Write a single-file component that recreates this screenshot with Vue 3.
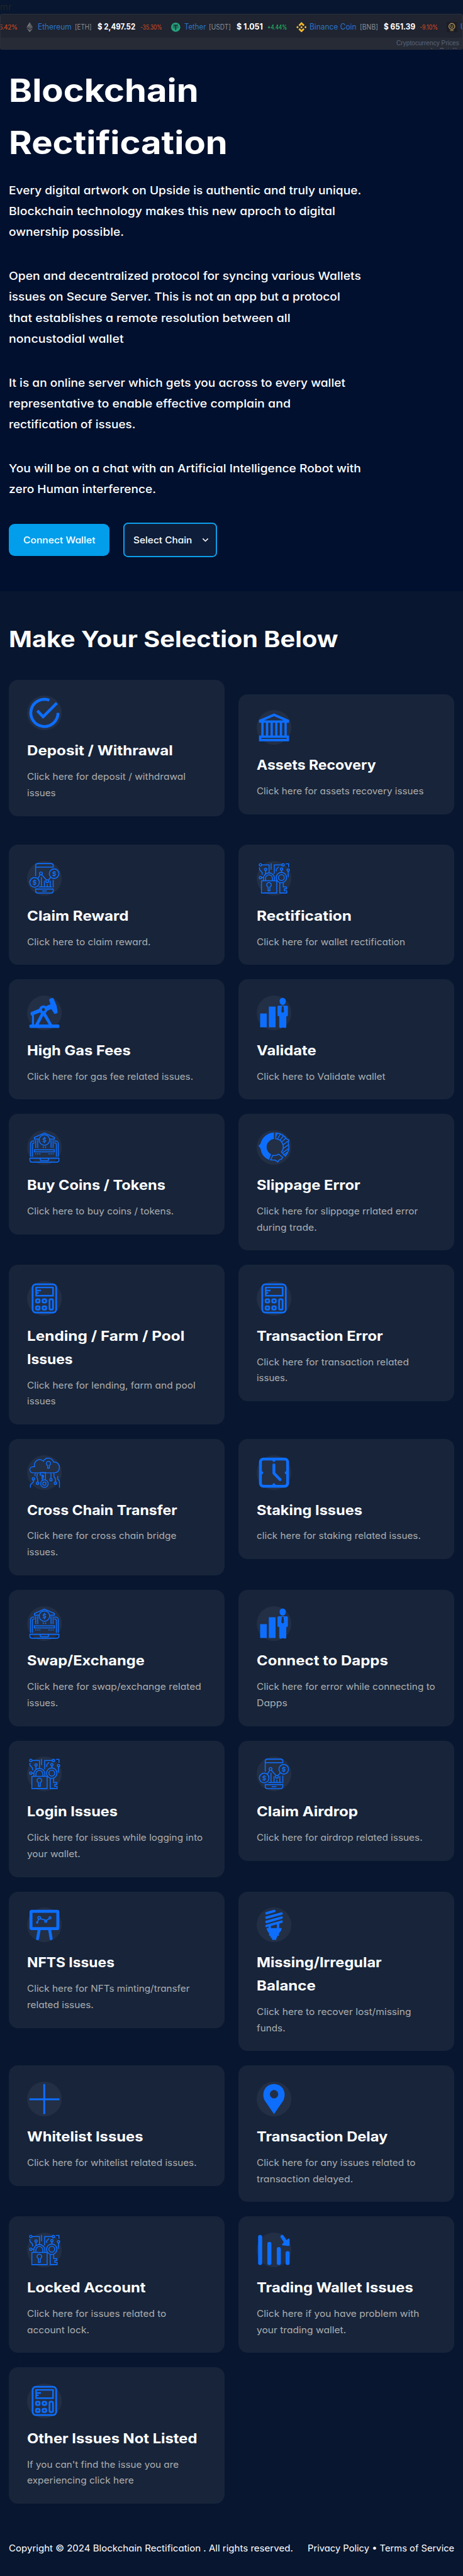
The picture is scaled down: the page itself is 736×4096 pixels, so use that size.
<script setup>
// Fits a single line of text to a fixed measure by widening or narrowing its glyphs.
const vFit = {
  mounted(el, { value }) {
    const root = el.closest('.page')
    const scale = root.getBoundingClientRect().width / 800
    const natural = el.getBoundingClientRect().width / scale
    el.style.width = `${value}px`
    el.style.transformOrigin = '0 50%'
    el.style.transform = `scaleX(${value / natural})`
  },
}

const coins = [
  { icon: 'eth', name: ['Ethereum', 58.5], sym: ['[ETH]', 29], price: ['$ 2,497.52', 65.5], change: ['-35.30%', 37.5], up: false },
  { icon: 'usdt', name: ['Tether', 37.5], sym: ['[USDT]', 38], price: ['$ 1.051', 45.5], change: ['+4.44%', 34], up: true },
  { icon: 'bnb', name: ['Binance Coin', 81], sym: ['[BNB]', 31.5], price: ['$ 651.39', 54.5], change: ['-9.10%', 31.5], up: false },
]

const paragraphs = [
  [['Every digital artwork on Upside is authentic and truly unique.', 609], ['Blockchain technology makes this new aproch to digital', 564], ['ownership possible.', 199]],
  [['Open and decentralized protocol for syncing various Wallets', 608.5], ['issues on Secure Server. This is not an app but a protocol', 572.5], ['that establishes a remote resolution between all', 486.5], ['noncustodial wallet', 198.5]],
  [['It is an online server which gets you across to every wallet', 581.5], ['representative to enable effective complain and', 487], ['rectification of issues.', 219]],
  [['You will be on a chat with an Artificial Intelligence Robot with', 608.5], ['zero Human interference.', 254.5]],
]

const cards = [
  { icon: 'check', title: [['Deposit / Withrawal', 252]], text: [['Click here for deposit / withdrawal', 274], ['issues', 49.5]], mod: 'tall' },
  { icon: 'bank', title: [['Assets Recovery', 206]], text: [['Click here for assets recovery issues', 288.5]], mod: 'low' },
  { icon: 'phone', title: [['Claim Reward', 175.5]], text: [['Click here to claim reward.', 213.5]] },
  { icon: 'lock', title: [['Rectification', 164]], text: [['Click here for wallet rectification', 256.5]] },
  { icon: 'pump', title: [['High Gas Fees', 179]], text: [['Click here for gas fee related issues.', 287]] },
  { icon: 'man', title: [['Validate', 103]], text: [['Click here to Validate wallet', 222.5]] },
  { icon: 'laptop', title: [['Buy Coins / Tokens', 239]], text: [['Click here to buy coins / tokens.', 253.5]] },
  { icon: 'donut', title: [['Slippage Error', 179]], text: [['Click here for slippage rrlated error', 278.5], ['during trade.', 104]] },
  { icon: 'calc', title: [['Lending / Farm / Pool', 272], ['Issues', 79]], text: [['Click here for lending, farm and pool', 291], ['issues', 49.5]] },
  { icon: 'calc', title: [['Transaction Error', 218]], text: [['Click here for transaction related', 263], ['issues.', 53.5]] },
  { icon: 'cloud', title: [['Cross Chain Transfer', 259.5]], text: [['Click here for cross chain bridge', 258], ['issues.', 53.5]] },
  { icon: 'clock', title: [['Staking Issues', 182.5]], text: [['click here for staking related issues.', 283.5]] },
  { icon: 'laptop', title: [['Swap/Exchange', 203]], text: [['Click here for swap/exchange related', 301], ['issues.', 53.5]] },
  { icon: 'man', title: [['Connect to Dapps', 227]], text: [['Click here for error while connecting to', 308.5], ['Dapps', 53]] },
  { icon: 'lock', title: [['Login Issues', 156.5]], text: [['Click here for issues while logging into', 303.5], ['your wallet.', 92]] },
  { icon: 'phone', title: [['Claim Airdrop', 175]], text: [['Click here for airdrop related issues.', 286.5]] },
  { icon: 'board', title: [['NFTS Issues', 151]], text: [['Click here for NFTs minting/transfer', 281], ['related issues.', 115]] },
  { icon: 'bulb', title: [['Missing/Irregular', 216], ['Balance', 102]], text: [['Click here to recover lost/missing', 267], ['funds.', 49.5]] },
  { icon: 'plus', title: [['Whitelist Issues', 200.5]], text: [['Click here for whitelist related issues.', 293]] },
  { icon: 'pin', title: [['Transaction Delay', 226.5]], text: [['Click here for any issues related to', 274.5], ['transaction delayed.', 166.5]] },
  { icon: 'lock', title: [['Locked Account', 205]], text: [['Click here for issues related to', 240.5], ['account lock.', 107.5]] },
  { icon: 'bars', title: [['Trading Wallet Issues', 270.5]], text: [['Click here if you have problem with', 281], ['your trading wallet.', 154.5]] },
  { icon: 'calc', title: [['Other Issues Not Listed', 294]], text: [["If you can't find the issue you are", 262], ['experiencing click here', 184.5]] },
]
</script>

<template>
  <div class="page">
    <div class="mr">mr</div>
    <div class="ticker">
      <div class="track">
        <span class="change first">5.42%</span>
        <div v-for="c in coins" :key="c.icon" class="coin">
          <svg class="coin-icon" viewBox="0 0 18 18">
            <g v-if="c.icon === 'eth'">
              <path d="M9 .2L3.6 9.2 9 12.2l5.400-3z" fill="#5a5c61" />
              <path d="M9 .2L3.600 9.200 9 6.800z" fill="#777a7d" />
              <path d="M9 6.800L3.600 9.200 9 12.200z" fill="#4a4c50" />
              <path d="M3.600 10.500L9 13.600l5.400-3.100L9 18z" fill="#696b6f" />
            </g>
            <g v-else-if="c.icon === 'usdt'">
              <circle cx="9" cy="9" r="8" fill="#26a17b" />
              <path d="M5 5.600h8M9 5.600v8.200" stroke="#1a3936" stroke-width="2" fill="none" />
              <ellipse cx="9" cy="8.900" rx="5" ry="1.300" stroke="#1a3936" stroke-width=".8" fill="none" />
            </g>
            <g v-else fill="#f3ba2f">
              <path d="M9 6.900L11.100 9 9 11.100 6.900 9zM2.100 6.900L4.200 9 2.100 11.100 0 9zM15.900 6.900L18 9l-2.100 2.100L13.800 9z" />
              <path d="M9 0l5.200 5.200-2.100 2.100L9 4.200 5.900 7.300 3.800 5.200zM9 18l5.200-5.200-2.100-2.100L9 13.800l-3.100-3.100-2.100 2.100z" />
            </g>
          </svg>
          <span v-fit="c.name[1]" class="name">{{ c.name[0] }}</span>
          <span v-fit="c.sym[1]" class="sym">{{ c.sym[0] }}</span>
          <span v-fit="c.price[1]" class="price">{{ c.price[0] }}</span>
          <span v-fit="c.change[1]" class="change" :class="{ up: c.up }">{{ c.change[0] }}</span>
        </div>
        <div class="coin">
          <svg class="coin-icon" viewBox="0 0 18 18">
            <rect width="18" height="18" fill="#1c1c23" />
            <circle cx="9" cy="7.500" r="5" fill="none" stroke="#b39a62" stroke-width="1.500" />
            <path d="M7.200 5v3a1.800 1.800 0 0 0 3.600 0V5M6 14.800h6" fill="none" stroke="#94804f" stroke-width="1.300" />
          </svg>
          <span class="name">U</span>
        </div>
      </div>
      <div class="credit">
        <span v-fit="108.5">Cryptocurrency Prices</span>
        <span>by Coinlib</span>
      </div>
    </div>

    <header class="hero">
      <h1>
        <span v-fit="328">Blockchain</span>
        <span v-fit="378">Rectification</span>
      </h1>
      <p v-for="(p, i) in paragraphs" :key="i">
        <span v-for="l in p" :key="l[0]" v-fit="l[1]">{{ l[0] }}</span>
      </p>
      <div class="actions">
        <button class="connect"><span v-fit="124.500">Connect Wallet</span></button>
        <button class="select">
          <span v-fit="101.500">Select Chain</span>
          <svg viewBox="0 0 12 8"><path d="M1.500 1.500L6 6l4.500-4.500" fill="none" stroke="#fff" stroke-width="1.600" /></svg>
        </button>
      </div>
    </header>

    <main>
      <h2><span v-fit="569">Make Your Selection Below</span></h2>
      <div class="grid">
        <article v-for="(c, i) in cards" :key="i" class="card" :class="c.mod">
          <svg class="icon" viewBox="0 0 60 60">
            <circle class="disc" cx="30" cy="30" r="30" />
            <g v-if="c.icon === 'check'" class="line" stroke-width="5">
              <path d="M53.500 30A23.500 23.500 0 1 1 38.500 8.100M17.800 26.200l10 10.500L51.500 13" />
            </g>
            <path v-else-if="c.icon === 'bank'" class="solid" fill-rule="evenodd" d="M30 6L56 17v5h-4v22h4v10H4V44h4V22H4v-5zM30 10.500L13 18h34zM12 22v22h4V22zm8 0v22h4V22zm8 0v22h4V22zm8 0v22h4V22zm8 0v22h4V22zM8 48v2h44v-2z" />
            <g v-else-if="c.icon === 'phone'" class="line" stroke-width="1.700">
              <path d="M14.800 26V8a3.500 3.500 0 0 1 3.500-3.500h23.400A3.500 3.500 0 0 1 45.200 8v2.500H14.800M14.800 48.500h30.400V52a3.500 3.500 0 0 1-3.500 3.500H18.300a3.500 3.500 0 0 1-3.500-3.500zM26 52h8M45.200 33v13M20 44.800h23M24.800 28v16.500M30 34v10.500M35 40v4.500M40 34v10.500M18.500 30.500l4-6.500M25.500 24l8 9M37 33l4-5" />
              <circle cx="13" cy="37" r="8.300" /><circle cx="46.800" cy="22" r="8.300" />
              <circle cx="24" cy="21.500" r="2.400" /><circle cx="35" cy="35" r="2.400" />
              <path d="M16 34.300h-4.200a1.500 1.500 0 0 0 0 2.800h2.400a1.500 1.500 0 0 1 0 2.800H10M13 32.300v2M13 40v2M49.800 19.300h-4.200a1.500 1.500 0 0 0 0 2.800H48a1.500 1.500 0 0 1 0 2.800h-4.200M46.800 17.300v2M46.800 25v2" />
            </g>
            <g v-else-if="c.icon === 'lock'" class="line" stroke-width="1.700">
              <path d="M8.300 34.300h26.400v21H8.300zM11.800 34v-4a9.500 9.500 0 0 1 19 0v4M15.300 34v-4a6 6 0 0 1 12 0v4M19.800 45a4 4 0 1 1 3 0v6.500h-3zM40 37.200v18.100h12v-3.600h-4v-3.500h3.500v-3.400h-5.500v-7.600" />
              <circle cx="42.700" cy="28.700" r="9" /><circle cx="42.700" cy="28.700" r="5" />
              <circle cx="6.500" cy="6.700" r="2" /><circle cx="45.700" cy="6.700" r="2" /><circle cx="15.500" cy="14.500" r="2" /><circle cx="43" cy="14" r="2" /><circle cx="54.500" cy="15.500" r="2" /><circle cx="6.500" cy="28.700" r="2" />
              <path d="M8.500 6.700h13V20M25 4v11M30.500 22V6.700h13.200M50 4.900h5.200V11M15.500 16.500V23M43 16v4M54.500 17.500V28M4.900 11v4l4.600 5v4M8.500 28.700H12M34 18v-3.500l4-4.500" />
            </g>
            <g v-else-if="c.icon === 'pump'" class="solid">
              <rect x="4" y="50" width="52" height="6" rx="2" />
              <path fill-rule="evenodd" d="M44.500 4.200Q46 4.500 47 8l4 9 2 11.500q-.5 2.500-5.500 3.200L42 23.500l-7.200 2.800a7.500 7.500 0 0 1-12.500 3L8 34.800Q5 33 6.500 28.700l14.500-6a7.500 7.500 0 0 1 11.500-4.200l8-3.500L38 7q2-2.500 6.500-2.800zM28.300 21.600a2.700 2.700 0 1 0 .1 0z" />
              <path d="M8.500 33H12v18H8.500zM25 29h6.500L44 51h-6L28.300 34.500 19.500 51h-6z" />
            </g>
            <g v-else-if="c.icon === 'man'" class="solid">
              <path d="M6 31h11.500v24H6zM21 19h11.700v36H21z" />
              <path d="M45 4c3.500 0 5.400 2.500 5.400 5.500C50.400 13.500 48 16.300 45 16.300s-5.400-2.800-5.400-6.800C39.600 6.500 41.500 4 45 4z" />
              <path fill-rule="evenodd" d="M38 17.500h14q2 0 2 2V34q0 2-2.800 2v18q-.2 2-2.700 2l-3.500-.8-3.500.8q-2.500 0-2.500-2V36q-3 0-3-2V19.500q0-2 2-2zM43.500 18.500L42.700 28l2.300 2 2.300-2-.8-9.500z" />
            </g>
            <g v-else-if="c.icon === 'laptop'" class="line" stroke-width="1.700">
              <path d="M21.500 15.500h-8.700v-3L30 5l17.200 7.500v3h-8.700M13.300 18.800H10.500A4.500 4.500 0 0 0 6 23.300V46M13.300 22h-1.500Q9.300 22 9.300 25v21M46.700 18.800h2.800a4.500 4.500 0 0 1 4.500 4.500V46M46.700 22h1.500q2.500 0 2.500 3v21M15 17v14M18.500 17v14M41.500 17v14M45 17v14M12.800 34h34.400v3.500H12.800zM28 28v3M32 28v3M4.900 48.500h50.200v3.300a3.500 3.500 0 0 1-3.500 3.500H8.400a3.500 3.500 0 0 1-3.500-3.500zM22.800 48.500h14.400v2.200q0 2-2 2H24.800q-2 0-2-2z" />
              <path d="M14 41h9.500M37 41h9.500" stroke-dasharray="2 1.500" />
              <circle cx="30" cy="17" r="9" />
              <path d="M33 14.200h-4.200a1.500 1.500 0 0 0 0 2.800h2.400a1.500 1.500 0 0 1 0 2.800H27M30 11.500v2.700M30 20v2.500" />
            </g>
            <g v-else-if="c.icon === 'donut'">
              <path class="solid" d="M29.800 4v11.300A14 14 0 0 0 25 41.800L21.300 51.500A25 25 0 0 1 6.500 31.500L3 26.800 6.500 24A25 25 0 0 1 29.800 4z" />
              <g class="line" stroke-width="1.700">
                <path d="M33 5a24 24 0 0 1 19 10.500l4 1.500-1.500 5A24 24 0 0 1 49.500 45l-6.700-7.200A14 14 0 0 0 33 15z" />
                <path d="M36 5L33 11M41 7l-5 8M46 10l-6 8M50 14l-7 7M54 19l-9 7M55.500 25L45.500 32M55 32l-10 7M53.500 38L46 43" />
                <path d="M28 43.500q6 1 10-2l7 5.500-2 3-4 1.500-2.500 3.500-4-3-8.500-.5z" />
              </g>
            </g>
            <g v-else-if="c.icon === 'calc'" class="line" stroke-width="3">
              <rect x="9.600" y="5.600" width="40.800" height="48.800" rx="5.500" />
              <path d="M15.700 11h29.200v14.200H15.700zM15 16.300h9M15 20.500h5" stroke-width="2.700" />
              <rect x="15.500" y="31.400" width="6.200" height="5.600" rx="2" /><rect x="26.900" y="31.400" width="6.200" height="5.600" rx="2" />
              <rect x="15.500" y="43.600" width="6.200" height="5.600" rx="2" /><rect x="26.900" y="43.600" width="6.200" height="5.600" rx="2" />
              <rect x="38.800" y="31.400" width="6" height="17.800" rx="2" />
            </g>
            <g v-else-if="c.icon === 'cloud'" class="line" stroke-width="1.600">
              <path d="M10 30.300a5.200 5.200 0 0 1 0-10.400h3C11 10.500 20.500 3.500 28.300 10.300 32.500 2.500 43 3.500 46 11.800 52 11 56 16 56 21q-.5 9.300-9 9.300z" />
              <path d="M35.500 17.500a3.700 3.700 0 1 1 3 0v4.800h-3zM26.800 43.500V40.500h-1v-3.700h1v-2.500h-4v-4.500h9V43M28.300 34v6M18 31l-1 6.500 1.500 5v3.800M14 31v5M11 43v3l-5.200 5v5M41.300 31v9M46.500 31v6l2.800 4v5M53 36v5l3 4v11" />
              <circle cx="30" cy="49" r="6.500" /><circle cx="30" cy="49" r="2.800" />
              <circle cx="11" cy="40.700" r="2" /><circle cx="18.200" cy="48.300" r="2" /><circle cx="41.300" cy="42.300" r="2" /><circle cx="49" cy="48.300" r="2" />
            </g>
            <g v-else-if="c.icon === 'clock'" class="line" stroke-width="5">
              <rect x="6.500" y="6.500" width="47" height="47" rx="5" />
              <path d="M29.800 16.500V31L40.500 42" stroke-linecap="round" stroke-linejoin="round" />
              <path d="M29.800 7v2M29.800 51v2M7 30.200h2M51 30.200h2" stroke-linecap="round" />
            </g>
            <g v-else-if="c.icon === 'board'" class="line" stroke-width="5.200">
              <rect x="6.800" y="6.600" width="46.400" height="30" rx="1" />
              <path d="M21 38l-2.800 16M39 38l2.600 16" stroke-linecap="round" />
              <g stroke-width="1.900"><circle cx="21" cy="18" r="2.300" /><circle cx="32.300" cy="24" r="1.800" /><circle cx="39.700" cy="18" r="1.700" /><circle cx="17.500" cy="26" r="1" /><path d="M18 25l2-5M23 19.500l7.800 2 2 1 5.500-3" /></g>
            </g>
            <g v-else-if="c.icon === 'bulb'">
              <path class="line" stroke-width="4.300" stroke-linecap="round" d="M17 10l13.500-3.800M17 17.500l26-7M17 25l26-7.500M17 32l26-7.500" />
              <path class="line" stroke-width="4" d="M22.500 30v7M37 27v10" />
              <path class="solid" d="M17 35.500h26.500l-1.500 5-3.500 4V49h-3v3.500H34V56h-7.500v-3.500H24V49h-2.500v-4.500l-3-4z" />
            </g>
            <path v-else-if="c.icon === 'plus'" class="line" stroke-width="3.200" d="M29.700 4v52M4 30.500h52" />
            <path v-else-if="c.icon === 'pin'" class="solid" fill-rule="evenodd" d="M30 56L14.500 33.500C7 20 14.500 4 30 4s23 16 15.500 29.500zM30 14.500a7.200 7.200 0 1 0 .1 0z" />
            <g v-else class="solid">
              <rect x="2.500" y="4" width="7" height="52" rx="3.300" /><rect x="18.500" y="16" width="7" height="40" rx="3.300" />
              <rect x="34.800" y="25" width="7" height="31" rx="3.300" /><rect x="50" y="32" width="7" height="24" rx="3.300" />
              <path d="M41.500 5.500q2.500-2.500 4.500-1l5.500 8.500 4-3q1.500 0 1.500 2v9q0 2-2 2l-10-1q-2-1-.5-2.500l2.500-3-5.500-8q-1-1.500 0-3z" />
            </g>
          </svg>
          <h3><span v-for="l in c.title" :key="l[0]" v-fit="l[1]">{{ l[0] }}</span></h3>
          <div class="text"><span v-for="l in c.text" :key="l[0]" v-fit="l[1]">{{ l[0] }}</span></div>
        </article>
      </div>
    </main>

    <footer>
      <span v-fit="491">Copyright © 2024 Blockchain Rectification . All rights reserved.</span>
      <span v-fit="253.500">Privacy Policy • Terms of Service</span>
    </footer>
  </div>
</template>

<style>
body { margin: 0; background: #08162f; }
</style>

<style scoped>
.page {
  zoom: 0.92;
  width: 800px;
  height: 4452px;
  overflow: hidden;
  background: #08162f;
  color: #fff;
  font-family: Inter, "Noto Sans", sans-serif;
  font-feature-settings: "cv11" 1;
  font-optical-sizing: none;
}
.page * { box-sizing: border-box; }
h1, h2, h3, p { margin: 0; }
h1, h2, h3 { font-feature-settings: normal; }
h1 span, p span, h2 span, h3 span, .text span { display: block; width: max-content; white-space: nowrap; }
.mr { height: 24px; font-size: 16px; line-height: 24px; color: #212529; }
.ticker {
  height: 62px;
  overflow: hidden;
  border: 1px solid #2a2f3a;
  border-radius: 3px;
  background: #262b36;
}
.track {
  display: flex;
  align-items: center;
  height: 40px;
  padding-top: 3px;
  background: #1f2430;
  overflow: hidden;
  white-space: nowrap;
  font-feature-settings: normal;
}
.coin { display: flex; align-items: baseline; flex: none; margin-left: 15px; }
.coin span { flex: none; }
.coin-icon { width: 18px; height: 18px; margin-right: 5.500px; align-self: center; }
.name { font-size: 13.500px; color: #2a74c9; }
.sym { margin-left: 5.500px; font-size: 12px; color: #8b8d91; }
.price { margin-left: 10px; font-size: 14px; font-weight: 700; }
.change { margin-left: 8px; font-size: 11px; color: #d94a1e; }
.change.up { color: #1fc163; }
.change.first { flex: none; width: 29px; margin: 1px 0 0 -3px; letter-spacing: -0.500px; }
.credit {
  display: flex;
  flex-direction: column;
  align-items: flex-end;
  padding: 3px 6px 0 0;
  font: 11px/13.500px "Liberation Sans", Arial, sans-serif;
  color: #5c6576;
}
.hero { height: 935.500px; padding: 26px 15px 0; background: #00102e; }
h1 { margin-bottom: 19.500px; font-size: 55px; font-weight: 700; line-height: 89.800px; }
h1 span { margin-left: 0; }
.hero p { margin-bottom: 40px; font-size: 19.500px; font-weight: 500; line-height: 36px; }
.actions { display: flex; align-items: center; gap: 24px; }
button { display: flex; align-items: center; color: #fff; font: inherit; font-size: 15.500px; font-weight: 500; white-space: nowrap; }
button span { flex: none; text-align: left; }
.connect { justify-content: center; width: 174px; height: 56px; border: 0; border-radius: 10px; background: #029deb; }
.select { justify-content: space-between; width: 162px; height: 60px; padding: 0 12px 0 15.500px; border: 2.200px solid #0d9fea; border-radius: 8px; background: #0e1d3a; }
.select svg { width: 12px; height: 8px; }
main { padding: 54px 15px 0; }
h2 { margin-bottom: 39px; font-size: 38.500px; font-weight: 700; line-height: 60px; }
.grid { display: grid; grid-template-columns: 373px 373px; column-gap: 24px; row-gap: 24.800px; align-items: start; }
.card { padding: 28px 0 25px 32px; border-radius: 16px; background: #17243a; }
.card.tall { margin-bottom: 24.500px; }
.card.low { margin-top: 25px; }
.icon { display: block; width: 60px; height: 60px; margin-bottom: 15px; }
.disc { fill: #232f45; }
.line { fill: none; stroke: #0d6efd; }
.solid { fill: #0d6efd; }
h3 { margin-bottom: 12px; font-size: 23.500px; font-weight: 700; line-height: 40px; }
.text { font-size: 16px; line-height: 28px; color: #adaeae; }
footer { display: flex; justify-content: space-between; padding: 64px 15px 33px; font-size: 16px; line-height: 28px; white-space: nowrap; }
footer span { flex: none; }
</style>
